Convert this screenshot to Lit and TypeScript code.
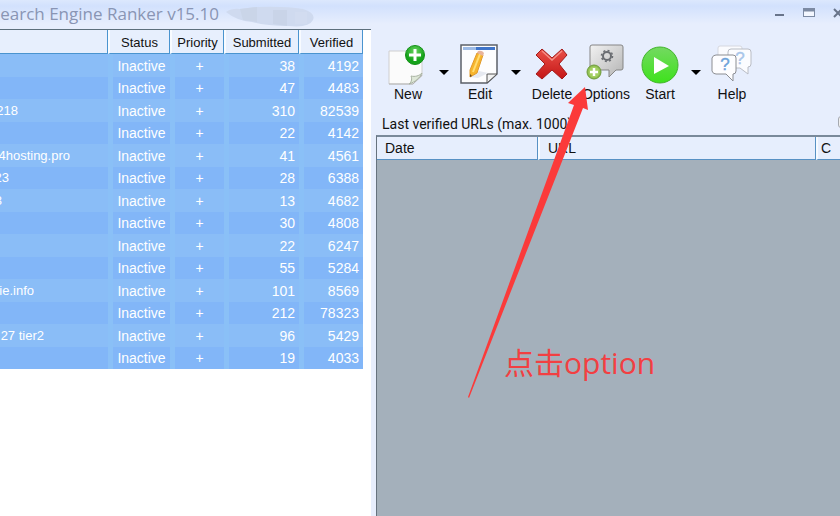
import { LitElement, html, css, svg } from "lit";
import { customElement } from "lit/decorators.js";
import { styleMap } from "lit/directives/style-map.js";

interface Project {
  name: string;
  /** width of the part of the name left in view by horizontal scrolling */
  shown: number;
  submitted: number;
  verified: number;
}

const row = (name: string, shown: number, submitted: number, verified: number): Project => ({
  name,
  shown,
  submitted,
  verified,
});

const PROJECTS: Project[] = [
  row("", 0, 38, 4192),
  row("", 0, 47, 4483),
  row("218", 18, 310, 82539),
  row("", 0, 22, 4142),
  row("4hosting.pro", 70, 41, 4561),
  row("23", 9, 28, 6388),
  row("3", 2, 13, 4682),
  row("", 0, 30, 4808),
  row("", 0, 22, 6247),
  row("", 0, 55, 5284),
  row("ie.info", 34, 101, 8569),
  row("", 0, 212, 78323),
  row("27 tier2", 44, 96, 5429),
  row("", 0, 19, 4033),
];

const newIcon = svg`
  <path d="M1 7H34V32L25 40H1Z" fill="#fbfbfb" stroke="#cfcfcf"/>
  <path d="M1 40H25L34 31" fill="none" stroke="#b5b5b5"/>
  <path d="M21 40C24 38 24 34 23 32C27 33 31 32 34 29C32 34 27 38 21 40Z" fill="#dfe8d8" stroke="#a9b3a2"/>
  <circle cx="27" cy="11" r="9.5" fill="url(#green)" stroke="#149018"/>
  <path d="M27 5V17M21 11H33" stroke="#fff" stroke-width="3"/>`;

const editIcon = svg`
  <path d="M1 1H37V30L27 39H1Z" fill="#fdfdfe" stroke="#5c6068" stroke-width="1.5"/>
  <path d="M3 3H35V6H3Z" fill="#3f74c9"/><path d="M3 3H16V6H3Z" fill="#9dbbe6"/>
  <path d="M27 39V30H37Z" fill="#f1f1f1" stroke="#555"/>
  <path d="M10 33L19 27L28 29L18 34Z" fill="#e6e9f0"/>
  <path d="M17 9L23 11L17 29L10 33L10 26Z" fill="#f7b52c" stroke="#e09a2c"/>
  <path d="M20 10L13 28" stroke="#ffdc73" stroke-width="2"/>
  <path d="M17 9L18 7Q22 6 24 9L23 12Z" fill="#e8b49c"/>
  <path d="M10 30L12 32L10 33Z" fill="#6a4a20"/>`;

const deleteIcon = svg`
  <path d="M10 5L20 14L30 5L35 11L27 20L35 30L30 35L20 26L10 35L4 30L13 20L4 11Z"
    fill="url(#red)" stroke="#a21b1b" stroke-linejoin="round"/>
  <path d="M10 7L20 16L30 7" fill="none" stroke="#f58d84" stroke-width="1.5"/>`;

const optionsIcon = svg`
  <path d="M6 1H35Q37 1 37 3V24Q37 26 35 26H30L23 33V26H6Q4 26 4 24V3Q4 1 6 1Z"
    fill="url(#grey)" stroke="#858585"/>
  <circle cx="21" cy="12" r="4" fill="none" stroke="#6a6d72" stroke-width="2"/>
  <circle cx="21" cy="12" r="5.5" fill="none" stroke="#6a6d72" stroke-width="1.6" stroke-dasharray="2 2.3"/>
  <circle cx="8" cy="28" r="7" fill="#8dbd4d" stroke="#6f9b3c"/>
  <circle cx="8" cy="28" r="5.5" fill="#a3cf63"/>
  <path d="M8 24V32M4 28H12" stroke="#fff" stroke-width="2.5"/>`;

const startIcon = svg`
  <circle cx="20" cy="21" r="18" fill="url(#lime)" stroke="#42b52c"/>
  <path d="M14 13L29 22L14 30Z" fill="#fff"/>`;

const helpIcon = svg`
  <path d="M8 2H28Q30 2 30 4V16H6V4Q6 2 8 2Z" fill="#fafbfe" stroke="#d5d8df"/>
  <path d="M19 5H36Q39 5 39 8V20Q39 23 36 23V30L28 24H19Q16 24 16 21V8Q16 5 19 5Z" fill="#fbfcff" stroke="#b9bcc4"/>
  <text class="mark faint" x="28" y="20">?</text>
  <path d="M4 11H21Q24 11 24 14V27Q24 30 21 30V37L14 30H4Q1 30 0 27V14Q1 11 4 11Z" fill="#fdfdff" stroke="#8b8d92"/>
  <text class="mark" x="13" y="26">?</text>`;

@customElement("tool-button")
export class ToolButton extends LitElement {
  static properties = { label: {}, icon: { attribute: false }, menu: { type: Boolean } };
  declare label: string;
  declare icon: unknown;
  declare menu: boolean;

  static styles = css`
    :host { display: flex; }
    button {
      border: 0;
      padding: 0;
      background: none;
      font: 14px/16px "Liberation Sans", Arial, sans-serif;
      color: #111;
    }
    .main {
      width: 54px;
      display: flex;
      flex-direction: column;
      align-items: center;
      gap: 2px;
    }
    .drop { width: 18px; display: grid; place-items: center; }
    .main svg { display: block; overflow: visible; }
    .mark { font: 17px "Liberation Sans", sans-serif; fill: #6fa3da; stroke: #6fa3da; stroke-width: 0.4; text-anchor: middle; }
    .faint { fill: #a9c6ea; stroke: #a9c6ea; }
  `;

  render() {
    return html`
      <button class="main">
        <svg width="40" height="40" viewBox="0 0 40 40" aria-hidden="true">
          <defs>
            <radialGradient id="green" cy="0.3"><stop offset="0" stop-color="#6ad45f"/><stop offset="1" stop-color="#16a31b"/></radialGradient>
            <linearGradient id="red" x2="0" y2="1"><stop offset="0" stop-color="#ea5048"/><stop offset="1" stop-color="#c41616"/></linearGradient>
            <linearGradient id="grey" x2="1" y2="1"><stop offset="0" stop-color="#f2f2f2"/><stop offset="1" stop-color="#b4b4b4"/></linearGradient>
            <linearGradient id="lime" x2="0" y2="1"><stop offset="0" stop-color="#74d961"/><stop offset="1" stop-color="#3ee21c"/></linearGradient>
          </defs>
          ${this.icon}
        </svg>
        <span>${this.label}</span>
      </button>
      ${this.menu
        ? html`<button class="drop" aria-label="${this.label} menu">
            <svg width="10" height="6" viewBox="0 0 10 6"><path d="M0 0H10L5 5Z" fill="#000" /></svg>
          </button>`
        : null}
    `;
  }
}

@customElement("project-list")
export class ProjectList extends LitElement {
  static styles = css`
    :host { display: block; background: #fff; border-top: 1px solid #5d6f7c; overflow: hidden; }
    table { width: 363px; table-layout: fixed; border-collapse: separate; border-spacing: 0; }
    .name { width: 108px; }
    .status { width: 62px; }
    .priority { width: 54px; }
    .submitted { width: 75px; }
    th {
      height: 24px;
      box-sizing: border-box;
      padding: 2px 0 0;
      font-size: 13px;
      font-weight: 400;
      color: #111;
      background: #e7effd;
      border-bottom: 1px solid #4a94cf;
      border-right: 1px solid #4a94cf;
      border-left: 2px solid #f8fbff;
    }
    th, td { line-height: 20px; white-space: nowrap; }
    td {
      height: 22px;
      padding: 0;
      color: #fff;
      background: #8abdf7;
      border-left: 5px solid #8ac0f7;
      text-align: right;
    }
    th:first-child, td:first-child { border-left: 0; }
    td:first-child { font-size: 13px; }
    tr:nth-child(odd) td { height: 23px; }
    tr:nth-child(even) td { background: #82b6f8; }
    td.center { text-align: center; }
    td.num { padding-right: 4px; }
    .clip { display: flex; justify-content: flex-end; overflow: hidden; }
  `;

  render() {
    return html`
      <table>
        <thead>
          <tr>
            <th class="name" aria-label="Project"></th>
            <th class="status">Status</th>
            <th class="priority">Priority</th>
            <th class="submitted">Submitted</th>
            <th>Verified</th>
          </tr>
        </thead>
        <tbody>
          ${PROJECTS.map(
            (p) => html`<tr>
              <td><span class="clip" style=${styleMap({ width: `${p.shown}px` })}>${p.name}</span></td>
              <td class="center">Inactive</td>
              <td class="center">+</td>
              <td class="num">${p.submitted}</td>
              <td class="num">${p.verified}</td>
            </tr>`,
          )}
        </tbody>
      </table>
    `;
  }
}

@customElement("app-root")
export class AppRoot extends LitElement {
  static styles = css`
    :host {
      display: flex;
      flex-direction: column;
      position: relative;
      min-height: 100vh;
      overflow: hidden;
      background: #e7eefd;
      color: #111;
      font: 14px/16px "Liberation Sans", Arial, sans-serif;
    }
    header {
      display: flex;
      height: 29px;
      background: linear-gradient(#dce8fd 0, #d2e1fd 6px, #e7eefd 24px);
    }
    h1 {
      display: flex;
      justify-content: flex-end;
      width: 219px;
      margin: 0;
      white-space: nowrap;
      font: 17px/28px "Open Sans", "Noto Sans", sans-serif;
      color: #8995b4;
    }
    .smudge { margin: 4px 0 0 6px; }
    .controls { display: flex; margin: 0 -14px 0 auto; }
    .controls button { width: 30px; height: 25px; padding: 0; border: 0; background: none; }
    .controls svg { display: block; margin: 0 auto; }
    main { flex: 1; display: grid; grid-template-columns: 371px minmax(0, 1fr); column-gap: 5px; }
    .side { display: flex; flex-direction: column; min-width: 0; }
    .tools { display: flex; padding: 15px 0 0 5px; }
    .caption { display: flex; justify-content: space-between; padding: 14px 0 3px 6px; }
    .caption span { font-family: Roboto, "Liberation Sans", sans-serif; }
    .caption button {
      width: 16px;
      height: 12px;
      margin-right: -14px;
      padding: 0;
      border: 1px solid #a5a9b0;
      border-radius: 3px;
      background: #eee;
    }
    .urls { flex: 1; background: #a4b0bb; border-top: 2px solid #79899a; border-left: 1px solid #66727e; }
    .urls table { width: 100%; table-layout: fixed; border-spacing: 0; }
    .urls th {
      height: 23px;
      box-sizing: border-box;
      padding: 0 0 0 8px;
      text-align: left;
      font-weight: 400;
      background: #e6eefd;
      border-right: 1px solid #5791c4;
      border-bottom: 1px solid #5791c4;
      border-left: 2px solid #f6faff;
    }
    .urls .date { width: 161px; border-left: 0; }
    .urls .more { width: 24px; padding-left: 3px; border-right: 0; }
    .pointer { position: absolute; left: 468px; top: 87px; }
    .note {
      position: absolute;
      left: 504px;
      top: 343px;
      margin: 0;
      font: 30px/40px "Open Sans", "Noto Sans CJK SC", sans-serif;
      color: #f23f42;
    }
  `;

  render() {
    return html`
      <header>
        <h1>earch Engine Ranker v15.10</h1>
        <svg class="smudge" width="90" height="24" viewBox="0 0 90 24" aria-hidden="true">
          <path d="M1 8Q7 4 15 5L32 3Q60 2 78 5Q91 9 88 16Q84 24 64 22Q40 22 27 18Q12 17 1 8Z" fill="#cfdaef" />
          <path d="M15 5L32 3V18L18 16Z" fill="#cad5e8" />
          <path d="M48 6H62V22L48 20Z" fill="#c9d4e8" />
          <path d="M70 8H82V20H70Z" fill="#d2dcf0" />
        </svg>
        <div class="controls">
          <button aria-label="Minimize">
            <svg width="12" height="12"><path d="M2 8H11" stroke="#68748a" stroke-width="2" /></svg>
          </button>
          <button aria-label="Maximize">
            <svg width="12" height="12">
              <rect x="0.5" y="1.5" width="11" height="8" fill="#f3f7ff" stroke="#7c8aa3" />
              <path d="M0 3H12" stroke="#7c8aa3" stroke-width="3" />
            </svg>
          </button>
          <button aria-label="Close">
            <svg width="12" height="12"><path d="M1 2L9 10M9 2L1 10" stroke="#68748a" stroke-width="2" /></svg>
          </button>
        </div>
      </header>
      <main>
        <project-list></project-list>
        <section class="side">
          <div class="tools">
            <tool-button label="New" .icon=${newIcon} menu></tool-button>
            <tool-button label="Edit" .icon=${editIcon} menu></tool-button>
            <tool-button label="Delete" .icon=${deleteIcon}></tool-button>
            <tool-button label="Options" .icon=${optionsIcon}></tool-button>
            <tool-button label="Start" .icon=${startIcon} menu></tool-button>
            <tool-button label="Help" .icon=${helpIcon}></tool-button>
          </div>
          <div class="caption">
            <span>Last verified URLs (max. 1000)</span>
            <button aria-label="Clear list"></button>
          </div>
          <div class="urls">
            <table>
              <thead>
                <tr>
                  <th class="date">Date</th>
                  <th>URL</th>
                  <th class="more">C</th>
                </tr>
              </thead>
            </table>
          </div>
        </section>
      </main>
      <svg class="pointer" width="122" height="312" viewBox="0 0 122 312" aria-hidden="true">
        <path d="M117 0L120 23L115 21L1 311L0 310L106 18L100 16Z" fill="#fb3a3a" />
      </svg>
      <p class="note">点击option</p>
    `;
  }
}
